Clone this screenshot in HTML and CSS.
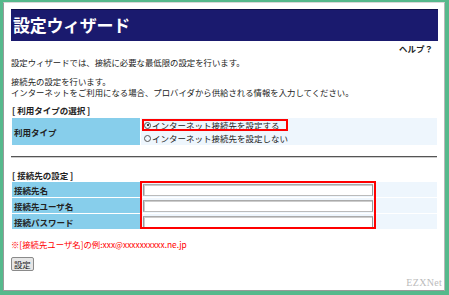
FILE: index.html
```html
<!DOCTYPE html>
<html lang="ja">
  <head>
    <meta charset="UTF-8" />
    <title>設定ウィザード</title>
    <link rel="stylesheet" href="styles.css">
  </head>
  <body>
    <div class="frame">
      <div class="wizard-title">設定ウィザード</div>
      <div class="help">ヘルプ？</div>

      <p class="intro">設定ウィザードでは、接続に必要な最低限の設定を行います。</p>
      <p class="intro intro-2">接続先の設定を行います。<br>インターネットをご利用になる場合、プロバイダから供給される情報を入力してください。</p>

      <div class="section-title">[ 利用タイプの選択 ]</div>
      <table class="form-table type-table">
        <tr>
          <th>利用タイプ</th>
          <td>
            <div class="radio-wrap">
              <div class="radio-row"><span class="radio checked"></span>インターネット接続先を設定する</div>
              <div class="radio-row"><span class="radio"></span>インターネット接続先を設定しない</div>
              <div class="mark mark-radio"></div>
            </div>
          </td>
        </tr>
      </table>

      <div class="divider"></div>

      <div class="section-title section-2">[ 接続先の設定 ]</div>
      <div class="conn-wrap">
        <table class="form-table conn-table">
          <tr>
            <th>接続先名</th>
            <td><div class="text-input"></div></td>
          </tr>
          <tr>
            <th>接続先ユーザ名</th>
            <td><div class="text-input"></div></td>
          </tr>
          <tr>
            <th>接続パスワード</th>
            <td><div class="text-input"></div></td>
          </tr>
        </table>
        <div class="mark mark-inputs"></div>
      </div>

      <p class="note">※[接続先ユーザ名]の例:xxx@xxxxxxxxxx.ne.jp</p>

      <div class="button">設定</div>

      <div class="watermark">EZXNet</div>
    </div>
  </body>
</html>
```

FILE: styles.css
```css
* {
  margin: 0;
  padding: 0;
  box-sizing: border-box;
}

body {
  width: 449px;
  height: 295px;
  background: #56b98c;
  overflow: hidden;
  font-family: 'Noto Sans CJK JP', 'Noto Sans', sans-serif;
  color: #222;
}

.frame {
  position: relative;
  margin: 2px 4px 0 3px;
  height: 289px;
  background: #fff;
  border-left: 1px solid #9a9a9a;
  border-top: 1px solid #d8d8d8;
  border-right: 1px solid #b8b8b8;
  border-bottom: 1px solid #9a9a9a;
  padding: 6px 6px 0 7px;
}

.wizard-title {
  height: 32px;
  background: #1a1a6e;
  border-top: 1px solid #10104a;
  color: #fff;
  font-size: 17px;
  font-weight: bold;
  line-height: 30px;
  padding-left: 2px;
  letter-spacing: -0.3px;
}

.help {
  text-align: right;
  font-size: 8.5px;
  font-weight: bold;
  line-height: 12px;
  padding-right: 5px;
  margin-top: 1px;
}

.intro {
  font-size: 8.4px;
  line-height: 10px;
  margin-top: 3px;
}

.intro-2 {
  line-height: 11px;
  margin-top: 9px;
}

.section-title {
  font-size: 8.5px;
  font-weight: bold;
  line-height: 10px;
  margin-top: 7px;
  padding-left: 1px;
}

.form-table {
  width: 100%;
  border-collapse: separate;
  border-spacing: 1px;
  font-size: 8.5px;
}

.form-table th {
  width: 128px;
  background: #87ceeb;
  text-align: left;
  font-weight: bold;
  padding-left: 2px;
}

.form-table td {
  background: #eef6fd;
  padding: 0;
}

.type-table {
  margin-top: 2px;
}

.type-table th {
  height: 27px;
}

.type-table td {
  vertical-align: top;
}

.radio-wrap {
  position: relative;
  width: 148px;
  padding: 2px 0 0 3px;
}

.radio-row {
  display: flex;
  align-items: center;
  line-height: 10px;
  white-space: nowrap;
}

.radio-row + .radio-row {
  margin-top: 3px;
}

.radio {
  display: inline-block;
  width: 7px;
  height: 7px;
  border: 1px solid #555;
  border-radius: 50%;
  margin-right: 1px;
  position: relative;
}

.radio.checked::after {
  content: "";
  position: absolute;
  left: 1.5px;
  top: 1.5px;
  width: 2px;
  height: 2px;
  border-radius: 50%;
  background: #000;
}

.mark {
  position: absolute;
  border: 2px solid #f00;
}

.mark-radio {
  left: 1px;
  top: 1px;
  width: 146px;
  height: 12px;
}

.divider {
  margin-top: 10px;
  height: 2px;
  border-top: 1px solid #555;
  border-bottom: 1px solid #ccc;
  margin-right: 1px;
}

.section-2 {
  margin-top: 12px;
}

.conn-wrap {
  position: relative;
  margin-top: 1px;
}

.conn-table th {
  height: 15px;
}

.text-input {
  width: 230px;
  height: 12px;
  margin-left: 2px;
  background: #fff;
  border: 1px solid #999;
  border-top-color: #aaa;
  border-bottom-color: #bbb;
  box-shadow: inset 1px 1px 0 #ccc;
}

.mark-inputs {
  left: 129px;
  top: 0;
  width: 236px;
  height: 48px;
}

.note {
  color: #f00;
  font-size: 8.4px;
  line-height: 10px;
  margin-top: 9px;
}

.button {
  display: inline-block;
  margin-top: 7px;
  height: 14px;
  padding: 0 2px;
  font-size: 8.4px;
  line-height: 12px;
  background: #e6e6e6;
  border: 1px solid #8a8a8a;
  border-radius: 2px;
}

.watermark {
  position: absolute;
  right: 2px;
  bottom: 2px;
  font-family: 'Liberation Serif', serif;
  font-size: 10px;
  color: #bbb;
  letter-spacing: 0.3px;
}
```
